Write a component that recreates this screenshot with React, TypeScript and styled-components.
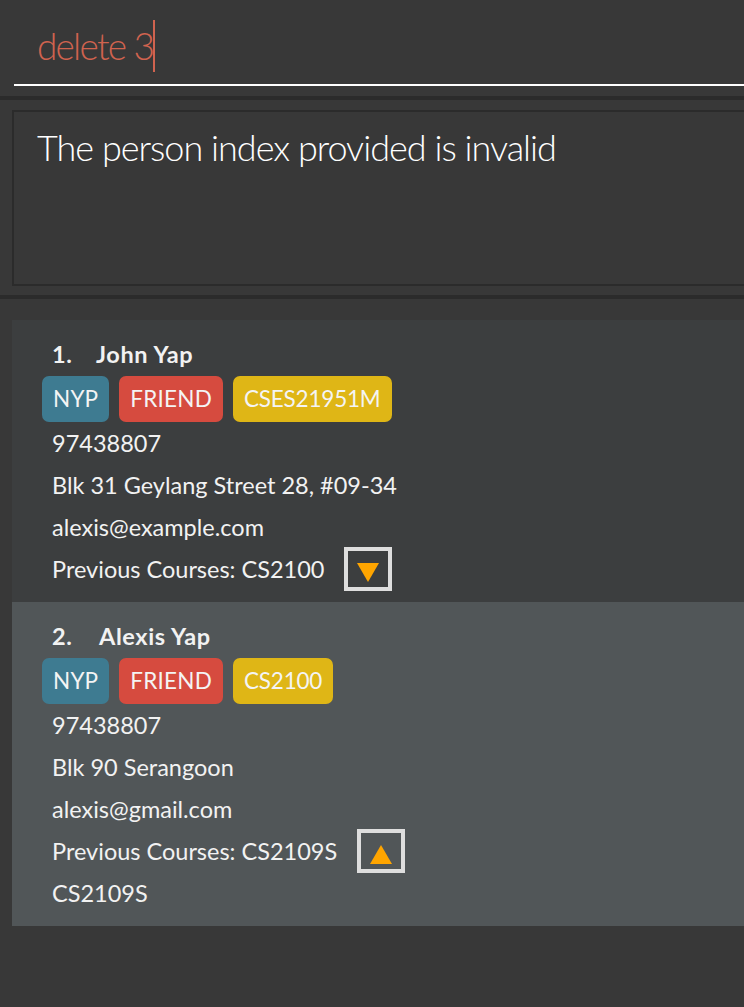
import React from "react";
import styled, { createGlobalStyle } from "styled-components";

const Global = createGlobalStyle`
  html, body { margin: 0; padding: 0; background: #383838; }
  body { font-family: "Lato", "Open Sans", sans-serif; overflow: hidden; }
`;

const Page = styled.div`
  width: 744px;
  height: 1007px;
  display: flex;
  flex-direction: column;
  background: #383838;
  overflow: hidden;
`;

const CommandSection = styled.div`
  height: 96px;
  padding-left: 14px;
  box-sizing: border-box;
`;

const CommandField = styled.div`
  height: 86px;
  box-sizing: border-box;
  border-bottom: 2px solid #ffffff;
  padding: 20px 0 0 23px;
  display: flex;
  align-items: flex-start;
`;

const CommandText = styled.span`
  font-family: "Lato", sans-serif;
  font-weight: 300;
  font-size: 37px;
  line-height: 52px;
  color: #d0634f;
  letter-spacing: -1.8px;
`;

const Caret = styled.span`
  display: inline-block;
  width: 2px;
  height: 52px;
  background: #d0634f;
  margin-left: 0;
`;

const Separator = styled.div`
  height: 4px;
  flex: none;
  background: #2b2b2b;
`;

const ResultSection = styled.div`
  height: 195px;
  box-sizing: border-box;
  padding: 10px 0 9px 12px;
`;

const ResultBox = styled.div`
  height: 100%;
  box-sizing: border-box;
  border: 2px solid #2b2b2b;
  border-right: none;
  padding: 11px 0 0 23px;
`;

const ResultText = styled.div`
  font-family: "Lato", sans-serif;
  font-weight: 300;
  font-size: 36px;
  line-height: 48px;
  color: #ffffff;
  letter-spacing: -1px;
`;

const ListSection = styled.div`
  flex: 1;
  padding: 21px 0 0 12px;
  display: flex;
  flex-direction: column;
`;

const Card = styled.div<{ $selected?: boolean }>`
  background: ${(p) => (p.$selected ? "#515658" : "#3c3e3f")};
  padding: 14px 0 12px 30px;
  color: #f2f2f2;
  font-family: "Lato", "Open Sans", sans-serif;
`;

const NameRow = styled.div`
  height: 42px;
  line-height: 40px;
  font-size: 23.5px;
  font-weight: 700;
  display: flex;
  padding-left: 10px;
  letter-spacing: 0.6px;
`;

const Index = styled.span<{ $w: number }>`
  width: ${(p) => p.$w}px;
`;

const Tags = styled.div`
  display: flex;
  gap: 10px;
  height: 46px;
`;

const Tag = styled.span<{ $color: string }>`
  background: ${(p) => p.$color};
  color: #f4f4f4;
  border-radius: 7px;
  padding: 0 11px;
  font-size: 22.5px;
  line-height: 46px;
  height: 46px;
  letter-spacing: ${(p) => (p.$color === "#dfb616" ? "-0.2px" : "0.2px")};
`;

const Line = styled.div`
  height: 42px;
  line-height: 42px;
  font-size: 23.5px;
  padding-left: 10px;
  display: flex;
  align-items: center;
`;

const Toggle = styled.div`
  width: 48px;
  height: 44px;
  box-sizing: border-box;
  border: 4px solid #dedede;
  margin-left: 20px;
  display: flex;
  align-items: center;
  justify-content: center;
  padding-top: 6px;
`;

const Arrow = ({ up }: { up?: boolean }) => (
  <svg width="22" height="19" viewBox="0 0 22 19">
    <polygon
      points={up ? "11,0 22,19 0,19" : "0,0 22,0 11,19"}
      fill="#ffa500"
    />
  </svg>
);

type Person = {
  idx: string;
  idxW: number;
  name: string;
  tags: { label: string; color: string }[];
  phone: string;
  address: string;
  email: string;
  courses: string;
  open: boolean;
  selected: boolean;
};

const people: Person[] = [
  {
    idx: "1.",
    idxW: 44,
    name: "John Yap",
    tags: [
      { label: "NYP", color: "#3e7b91" },
      { label: "FRIEND", color: "#d64b3f" },
      { label: "CSES21951M", color: "#dfb616" },
    ],
    phone: "97438807",
    address: "Blk 31 Geylang Street 28, #09-34",
    email: "alexis@example.com",
    courses: "CS2100",
    open: false,
    selected: false,
  },
  {
    idx: "2.",
    idxW: 47,
    name: "Alexis Yap",
    tags: [
      { label: "NYP", color: "#3e7b91" },
      { label: "FRIEND", color: "#d64b3f" },
      { label: "CS2100", color: "#dfb616" },
    ],
    phone: "97438807",
    address: "Blk 90 Serangoon",
    email: "alexis@gmail.com",
    courses: "CS2109S",
    open: true,
    selected: true,
  },
];

export default function App() {
  return (
    <>
      <Global />
      <Page>
        <CommandSection>
          <CommandField>
            <CommandText>delete 3</CommandText>
            <Caret />
          </CommandField>
        </CommandSection>
        <Separator />
        <ResultSection>
          <ResultBox>
            <ResultText>The person index provided is invalid</ResultText>
          </ResultBox>
        </ResultSection>
        <Separator />
        <ListSection>
          {people.map((p) => (
            <Card key={p.idx} $selected={p.selected}>
              <NameRow>
                <Index $w={p.idxW}>{p.idx}</Index>
                <span>{p.name}</span>
              </NameRow>
              <Tags>
                {p.tags.map((t) => (
                  <Tag key={t.label} $color={t.color}>
                    {t.label}
                  </Tag>
                ))}
              </Tags>
              <Line>{p.phone}</Line>
              <Line>{p.address}</Line>
              <Line>{p.email}</Line>
              <Line>
                Previous Courses: {p.courses}
                <Toggle>
                  <Arrow up={p.open} />
                </Toggle>
              </Line>
              {p.open && <Line>{p.courses}</Line>}
            </Card>
          ))}
        </ListSection>
      </Page>
    </>
  );
}
